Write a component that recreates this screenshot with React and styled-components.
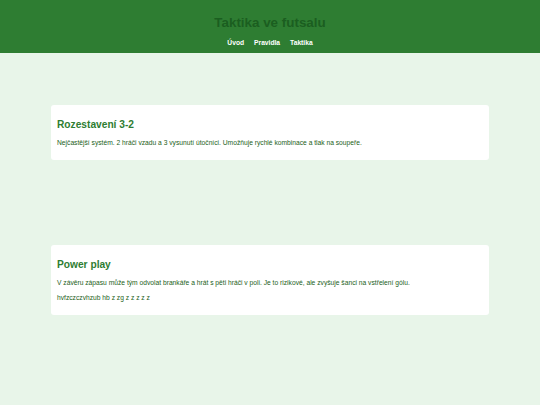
import React from "react";
import styled, { createGlobalStyle } from "styled-components";

const Global = createGlobalStyle`
  html, body { margin: 0; padding: 0; }
  body {
    background: #e8f5e9;
    font-family: "Liberation Sans", Arial, sans-serif;
    color: #1b5e20;
  }
`;

const Header = styled.header`
  background: #2e7d32;
  height: 53px;
  box-sizing: border-box;
  padding-top: 15px;
  display: flex;
  flex-direction: column;
  align-items: center;
`;

const Title = styled.h1`
  margin: 0;
  font-size: 13.4px;
  line-height: 16px;
  font-weight: bold;
  color: #1b5e20;
`;

const Nav = styled.nav`
  margin-top: 8px;
  display: flex;
  gap: 10px;
`;

const NavLink = styled.a`
  color: #ffffff;
  font-weight: bold;
  font-size: 6.7px;
  line-height: 8px;
  text-decoration: none;
`;

const Main = styled.main`
  padding: 52px 51px 0;
  display: flex;
  flex-direction: column;
  gap: 85px;
`;

const Card = styled.section`
  background: #ffffff;
  border-radius: 3px;
  padding: 6px;
`;

const Heading = styled.h2`
  margin: 8.3px 0;
  font-size: 10.2px;
  line-height: 11.5px;
  font-weight: bold;
  color: #2e7d32;
`;

const Text = styled.p`
  margin: 6.7px 0;
  font-size: 6.7px;
  line-height: 8.3px;
  color: #1b5e20;
`;

const sections = [
  {
    title: "Rozestavení 3-2",
    paras: [
      "Nejčastější systém. 2 hráči vzadu a 3 vysunutí útočníci. Umožňuje rychlé kombinace a tlak na soupeře.",
    ],
  },
  {
    title: "Power play",
    paras: [
      "V závěru zápasu může tým odvolat brankáře a hrát s pěti hráči v poli. Je to rizikové, ale zvyšuje šanci na vstřelení gólu.",
      "hvfzczczvhzub hb z zg z z z z z",
    ],
  },
];

export default function App() {
  return (
    <>
      <Global />
      <Header>
        <Title>Taktika ve futsalu</Title>
        <Nav>
          <NavLink href="#">Úvod</NavLink>
          <NavLink href="#">Pravidla</NavLink>
          <NavLink href="#">Taktika</NavLink>
        </Nav>
      </Header>
      <Main>
        {sections.map((s) => (
          <Card key={s.title}>
            <Heading>{s.title}</Heading>
            {s.paras.map((p, i) => (
              <Text key={i}>{p}</Text>
            ))}
          </Card>
        ))}
      </Main>
    </>
  );
}
